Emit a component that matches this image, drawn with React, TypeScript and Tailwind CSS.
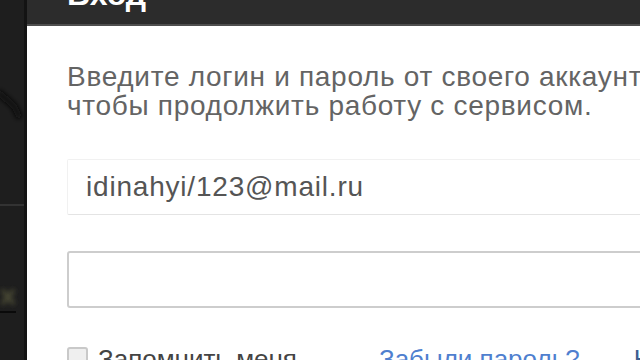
import React from 'react';

const font = "font-['Liberation_Sans',Arial,sans-serif]";

const Backdrop: React.FC = () => (
    <div className="relative w-[27px] h-full shrink-0 bg-[#1e1e1e] border-r-[3px] border-[#131313] overflow-hidden">
        <svg width="24" height="360" viewBox="0 0 24 360" className="block">
            <defs>
                <filter id="blur" x="-50%" y="-50%" width="200%" height="200%">
                    <feGaussianBlur stdDeviation="2.5" />
                </filter>
            </defs>
            <path d="M-2 92 L14 106 L20 118" stroke="#0c0c0c" strokeWidth="6" fill="none" filter="url(#blur)" />
            <rect x="0" y="204" width="24" height="2" fill="#333333" />
            <path d="M2 290 L14 304 M2 304 L14 290" stroke="#4a4a34" strokeWidth="4" fill="none" filter="url(#blur)" />
            <rect x="0" y="311" width="16" height="2" fill="#0a0a0a" />
        </svg>
    </div>
);

const Header: React.FC = () => (
    <div className="h-[26px] shrink-0 bg-[#2c2c2c] border-b-2 border-[#4e4e4e] overflow-hidden pl-[40px]">
        <h1 className="mt-[-21px] text-[32px] leading-[30px] font-bold text-white whitespace-nowrap">Вход</h1>
    </div>
);

export default function App() {
    return (
        <div className={`${font} flex w-[640px] h-[360px] overflow-hidden bg-[#1e1e1e]`}>
            <Backdrop />
            <div className="flex-1 min-w-0 flex flex-col bg-white overflow-hidden">
                <Header />
                <div className="w-[760px] pl-[40px] pt-[36px]">
                    <p className="text-[28px] leading-[29px] tracking-[0.7px] text-[#646464] whitespace-nowrap">
                        Введите логин и пароль от своего аккаунта,
                        <br />
                        чтобы продолжить работу с сервисом.
                    </p>

                    <input
                        readOnly
                        value="idinahyi/123@mail.ru"
                        className="mt-[39px] block w-[640px] h-[56px] pl-[18px] text-[28px] tracking-[0.8px] text-[#555] bg-white border border-[#f1f1f1] border-b-[#e4e4e4] rounded-[2px] outline-none"
                    />

                    <input
                        readOnly
                        type="password"
                        value=""
                        className="mt-[36px] block w-[640px] h-[57px] pl-[18px] text-[28px] bg-white border-2 border-[#cdcdcd] rounded-[3px] outline-none"
                    />

                    <div className="mt-[36px] flex items-start whitespace-nowrap text-[26px] leading-[30px]">
                        <label className="flex items-start gap-[10px] text-[#444]">
                            <span className="mt-[3px] w-[21px] h-[21px] rounded-[3px] border-2 border-[#c9c9c9] bg-[#efefef]" />
                            Запомнить меня
                        </label>
                        <a className="ml-[82px] text-[#4f7fcf]">Забыли пароль?</a>
                        <span className="ml-[54px] text-[#3d5f8f]">Нет аккаунта?</span>
                    </div>
                </div>
            </div>
        </div>
    );
}
